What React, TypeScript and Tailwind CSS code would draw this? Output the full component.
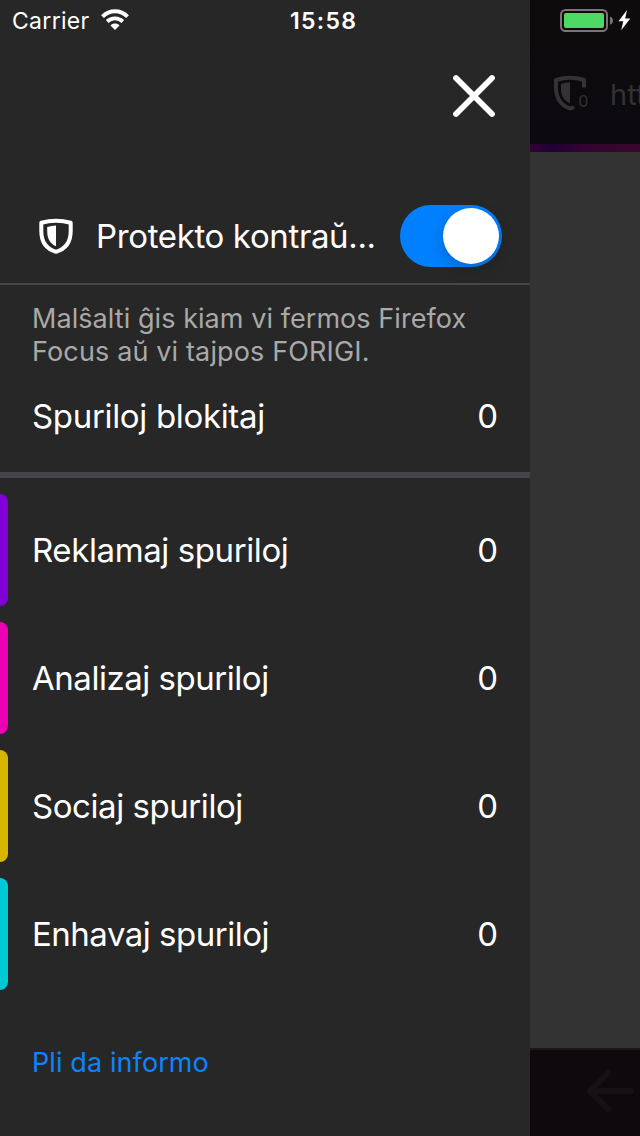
const trackers = [
  { label: 'Reklamaj spuriloj', bar: 'bg-[#8000d7]', spacing: 'tracking-[-0.4px]' },
  { label: 'Analizaj spuriloj', bar: 'bg-[#ed00b5]', spacing: 'tracking-[-0.47px]' },
  { label: 'Sociaj spuriloj', bar: 'bg-[#d7b600]', spacing: 'tracking-[-0.44px]' },
  { label: 'Enhavaj spuriloj', bar: 'bg-[#00c8d7]', spacing: 'tracking-[-0.5px]' },
];

function Wifi() {
  return (
    <svg className="ml-[11px] h-[22px] w-[28px] shrink-0" viewBox="0 0 28 22" fill="none">
      <path d="M1.500 7.700C8.500 0.500 19.500 0.500 26.500 7.700" stroke="#fff" strokeWidth="3.900" />
      <path d="M6.200 12.500C10.600 8.300 17.400 8.300 21.800 12.500" stroke="#fff" strokeWidth="3.900" />
      <path d="M14 21L9.500 16.500C12 13.900 16 13.900 18.500 16.500Z" fill="#fff" />
    </svg>
  );
}

function Drawer() {
  return (
    <aside className="flex h-full w-[530px] shrink-0 flex-col bg-[#272727] text-white">
      <div className="flex h-[40px] items-center">
        <div className="flex w-[290px] items-center pl-[12px] text-[23px] leading-[40px]">
          <span className="w-[78px] pt-[2px] tracking-[0.3px] whitespace-nowrap">Carrier</span>
          <Wifi />
        </div>
        <span className="pt-[2px] text-[23px] leading-[40px] font-semibold tracking-[1.3px]">15:58</span>
      </div>
      <div className="flex h-[112px] items-center justify-end pr-[34px]">
        <svg className="h-[44px] w-[44px]" viewBox="0 0 44 44" stroke="#fff" strokeWidth="5.8" strokeLinecap="round">
          <path d="M4 4L40 40M40 4L4 40" />
        </svg>
      </div>
      <div className="mt-[36px] flex h-[97px] items-center border-b-2 border-[#45454a] pl-[39px]">
        <svg className="h-[36px] w-[34px] shrink-0" viewBox="0 0 34 36" fill="none">
          <path d="M2.300 4.700Q17 0.800 31.700 4.700V13C31.700 24 26.500 31 17 33.800C7.500 31 2.300 24 2.300 13Z" stroke="#fff" strokeWidth="4" strokeLinejoin="round" />
          <path d="M8.200 9Q12.500 7.700 17 7.500V28.300C11 25.500 8.200 21 8.200 13Z" fill="#fff" />
        </svg>
        <span className="ml-[23px] w-[304px] text-[33px] leading-[40px] tracking-[-0.36px] whitespace-nowrap">Protekto kontraŭ...</span>
        <button className="flex h-[62px] w-[102px] shrink-0 items-center justify-end rounded-full bg-[#0080ff] pr-[3px]" aria-label="Protekto kontraŭ spurado">
          <span className="h-[56px] w-[56px] rounded-full bg-white shadow-[0_5px_16px_rgba(0,0,0,0.2)]" />
        </button>
      </div>
      <p className="h-[82px] pt-[17px] pl-[32px] text-[27px] leading-[33px] whitespace-nowrap text-[#a9a9a9]">
        <span className="tracking-[0.06px]">Malŝalti ĝis kiam vi fermos Firefox</span><br /><span className="tracking-[0.14px]">Focus aŭ vi tajpos FORIGI.</span>
      </p>
      <div className="flex h-[111px] justify-between border-b-[6px] border-[#45454a] pt-[29px] pr-[32px] pl-[32px] text-[33px] leading-[40px]">
        <span className="tracking-[-0.33px]">Spuriloj blokitaj</span>
        <span>0</span>
      </div>
      <div className="mt-[16px] flex flex-col gap-[16px]">
        {trackers.map((t) => (
          <div key={t.label} className="flex h-[112px] items-center pr-[32px] text-[33px] leading-[40px]">
            <span className={`h-[112px] w-[8px] rounded-r-[8px] ${t.bar}`} />
            <span className={`ml-[24px] flex-1 ${t.spacing}`}>{t.label}</span>
            <span>0</span>
          </div>
        ))}
      </div>
      <a className="mt-[56px] pl-[32px] text-[27px] leading-[34px] tracking-[0.1px] text-[#0a84ff]">Pli da informo</a>
    </aside>
  );
}

function PageBehind() {
  return (
    <main className="flex h-full w-[110px] flex-col overflow-hidden bg-[#333333]">
      <div className="flex h-[144px] shrink-0 flex-col bg-[linear-gradient(#0e0b0c,#0c0a0f)]">
        <div className="flex h-[42px] items-center pl-[30px]">
          <svg className="h-[24px] w-[72px] shrink-0" viewBox="0 0 72 24">
            <rect x="1" y="1" width="46" height="21" rx="4.500" fill="none" stroke="#777576" strokeWidth="2" />
            <rect x="4" y="4" width="40" height="15" rx="2" fill="#4cd964" />
            <path d="M50 7.500Q53 8.500 53 11.500T50 15.500Z" fill="#777576" />
            <path d="M67 1L58.500 12.200H63.300L61.200 21.300L70.300 9.500H65.200Z" fill="#fff" />
          </svg>
        </div>
        <div className="flex h-[102px] items-center text-[#333234]">
          <svg className="ml-[23px] h-[36px] w-[37px] shrink-0" viewBox="0 0 37 36" fill="none">
            <path d="M31 12.500V5Q17 0.500 3 5V13C3 25 10 31.500 17.500 33.500L21 32" stroke="currentColor" strokeWidth="4" strokeLinejoin="round" />
            <path d="M8 9Q12.500 7.500 17 7.300V28.500C11 25.500 8 21 8 14Z" fill="currentColor" />
            <text x="25.300" y="32" fill="currentColor" fontFamily="Inter" fontSize="16">0</text>
          </svg>
          <span className="ml-[20px] pt-[4px] text-[29px] leading-[36px] whitespace-nowrap">htt</span>
        </div>
      </div>
      <div className="h-[8px] shrink-0 bg-[linear-gradient(90deg,#2e0431_0%,#200037_20%,#240232_30%,#34042f_48%,#38062b_100%)]" />
      <div className="flex-1" />
      <div className="flex h-[88px] shrink-0 items-center justify-end border-t-2 border-[#19171a] bg-[#0e090d] pb-[4px]">
        <svg className="h-[44px] w-[55px]" viewBox="0 0 55 44" stroke="#151114" strokeWidth="6" strokeLinecap="round" strokeLinejoin="round" fill="none">
          <path d="M23 4L5 22L23 40M5 22H46" />
        </svg>
      </div>
    </main>
  );
}

export default function App() {
  return (
    <div className="flex h-[1136px] w-[640px] overflow-hidden font-['Inter',sans-serif] antialiased">
      <Drawer />
      <PageBehind />
    </div>
  );
}
